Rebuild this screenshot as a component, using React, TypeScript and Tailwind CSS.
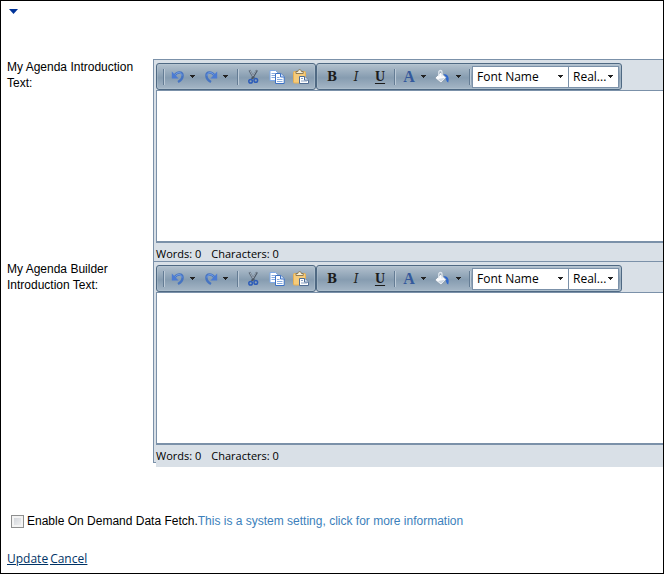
import React, { useState } from 'react';

const Caret = () => (
    <svg width="5" height="3" viewBox="0 0 5 3" className="shrink-0" fill="#222" shapeRendering="crispEdges">
        <path d="M0 0h5v1H0zM1 1h3v1H1zM2 2h1v1H2z" />
    </svg>
);

const UndoIcon = ({ flip = false }: { flip?: boolean }) => (
    <svg width="16" height="16" viewBox="0 0 16 16" className={flip ? '-scale-x-100' : ''} fill="none">
        <path d="M4.6 6.4C7 2.6 12.6 2.2 12.6 6.8C12.6 10 10.4 11.6 8 13" stroke="#4674c2" strokeWidth="2.4" />
        <path d="M5 5.8C7 2.8 11.8 2.8 12 6.6" stroke="#79a4ea" strokeWidth="0.9" />
        <path d="M1.8 2.6V9.4H8.6Z" fill="#4b7bd3" />
    </svg>
);

const CutIcon = () => (
    <svg width="16" height="16" viewBox="0 0 16 16" fill="none">
        <path d="M4.4 1.2L9.2 9.4" stroke="#5c6876" strokeWidth="2" />
        <path d="M12 1.2L6.8 10" stroke="#4a5664" strokeWidth="2" />
        <path d="M11.4 1.4L7.8 7.4M5 1.6L8 7" stroke="#b9c6d4" strokeWidth="0.7" />
        <circle cx="5.6" cy="12.2" r="1.8" stroke="#2d5cb8" strokeWidth="1.5" />
        <circle cx="10.8" cy="11.4" r="1.8" stroke="#2d5cb8" strokeWidth="1.5" />
    </svg>
);

const CopyIcon = () => (
    <svg width="16" height="16" viewBox="0 0 16 16">
        <path d="M1 1.5H6.5L9.5 4.5V11.5H1Z" fill="#fff" stroke="#7fa9e4" />
        <path d="M2.5 4.5H6M2.5 6.5H7M2.5 8.5H7" stroke="#86aadf" />
        <path d="M6.5 4.5H11.8L15.2 7.6V14.5H6.5Z" fill="#fff" stroke="#3c71c4" />
        <path d="M11.5 4.5V8H15.2" fill="#d6e5fa" stroke="#3c71c4" />
        <path d="M8 8.5H10.5M8 10.5H13.5M8 12.5H13.5" stroke="#86aadf" />
    </svg>
);

const PasteIcon = () => (
    <svg width="16" height="16" viewBox="0 0 16 16">
        <rect x="0.5" y="2.5" width="12" height="11.5" rx="1" fill="#f5cb7a" stroke="#e8b153" />
        <path d="M3 4.5V2.5H4.8C5 0 8.2 0 8.4 2.5H10.2V4.5Z" fill="#f5efd8" stroke="#84704c" strokeWidth="0.9" />
        <path d="M6.5 7.5H11.5L15.5 11.2V14.5H6.5Z" fill="#fff" stroke="#506d94" />
        <path d="M11.5 7.5V11.2H15.5" fill="#d7e3f2" stroke="#506d94" />
        <path d="M8 9.5H10M8 12H14" stroke="#8ba3c4" />
    </svg>
);

const FillIcon = () => (
    <svg width="16" height="16" viewBox="0 0 16 16">
        <path d="M9.4 5C13.6 5 15.8 8 14.2 13.6C12.2 12.6 12.4 10.4 11.4 9.2Z" fill="#2f67cd" />
        <path d="M1 9L6.6 3.4L12.2 8.6L7 14Z" fill="#fbfcfe" stroke="#8393a5" strokeWidth="0.7" />
        <path d="M4 10L11 8.8L7 12.8Z" fill="#cbd5e0" />
        <path d="M4.8 7.2V3C4.8 1 8 1 8 3V7.4" fill="none" stroke="#dfe6ed" strokeWidth="1.3" />
    </svg>
);

const Separator = ({ className = '' }: { className?: string }) => (
    <div className={`h-4 w-[2px] shrink-0 border-l border-[#647c94] bg-[#bccad7] ${className}`}></div>
);

interface ToolProps {
    label: string;
    children: React.ReactNode;
}

const Tool = ({ label, children }: ToolProps) => (
    <button type="button" aria-label={label} className="flex h-6 w-6 shrink-0 items-center justify-center">
        {children}
    </button>
);

const Arrow = ({ label }: { label: string }) => (
    <button type="button" aria-label={label} className="flex h-6 w-[9px] shrink-0 items-center">
        <Caret />
    </button>
);

interface PickerProps {
    label: string;
    options: string[];
    className: string;
}

const Picker = ({ label, options, className }: PickerProps) => (
    <div className={`relative h-[22px] shrink-0 ${className}`}>
        <select
            aria-label={label}
            className="h-full w-full appearance-none border border-[#7b91a9] bg-white pl-1 font-['Open_Sans','Noto_Sans',sans-serif] text-[12px] leading-5 text-black"
        >
            {options.map((option) => (
                <option key={option}>{option}</option>
            ))}
        </select>
        <span className="pointer-events-none absolute inset-y-0 right-[6px] flex items-center">
            <Caret />
        </span>
    </div>
);

const groupClass =
    'flex h-[27px] shrink-0 items-center rounded-[3px] border border-[#4f6983] bg-linear-to-b from-[#b3c1ce] from-0% via-[#869cb0] via-55% to-[#a5b6c6] to-100% shadow-[inset_0_0_0_1px_rgba(190,205,218,0.35)]';

interface EditorProps {
    id: string;
    last?: boolean;
}

const Editor = ({ id, last = false }: EditorProps) => {
    const [text, setText] = useState('');
    const words = text.trim() ? text.trim().split(/\s+/).length : 0;

    return (
        <div className="flex min-w-0 flex-1 overflow-hidden border-t border-[#7b91a9]">
            <div className={`w-[3px] shrink-0 border-l border-[#7b91a9] bg-[#d9e0e7] ${last ? 'mb-1 border-b' : ''}`}></div>
            <div className="min-w-0 flex-1 bg-[#d9e0e7]">
                {/* Toolbar */}
                <div className="flex pt-[3px]">
                    <div className={groupClass}>
                        <Separator className="ml-[6px] mr-px" />
                        <Tool label="Undo"><UndoIcon /></Tool>
                        <Arrow label="Undo history" />
                        <Tool label="Redo"><UndoIcon flip /></Tool>
                        <Arrow label="Redo history" />
                        <Separator className="ml-[5px] mr-[2px]" />
                        <Tool label="Cut"><CutIcon /></Tool>
                        <Tool label="Copy"><CopyIcon /></Tool>
                        <Tool label="Paste"><PasteIcon /></Tool>
                        <div className="w-[2px]"></div>
                    </div>
                    <div className={groupClass}>
                        <div className="w-[3px]"></div>
                        <Tool label="Bold">
                            <span className="font-['DejaVu_Serif',serif] text-[12px] font-bold leading-4 text-[#1c1c1c]">B</span>
                        </Tool>
                        <Tool label="Italic">
                            <span className="font-['DejaVu_Serif',serif] text-[12px] italic leading-4 text-[#222]">I</span>
                        </Tool>
                        <Tool label="Underline">
                            <span className="font-['Liberation_Serif',serif] text-[14px] font-bold leading-4 text-[#1c1c1c] underline underline-offset-2">U</span>
                        </Tool>
                        <Separator className="ml-[2px] mr-px" />
                        <Tool label="Font color">
                            <span className="font-['Liberation_Serif',serif] text-[16px] font-bold leading-4 text-[#34599c]">A</span>
                        </Tool>
                        <Arrow label="Choose font color" />
                        <Tool label="Fill"><FillIcon /></Tool>
                        <div className="w-[2px]"></div>
                        <Arrow label="Choose fill color" />
                        <Separator className="ml-1 mr-px" />
                        <Picker label="Font name" options={['Font Name']} className="w-[97px]" />
                        <Picker label="Font size" options={['Real...']} className="-ml-px w-[51px]" />
                        <div className="w-[2px]"></div>
                    </div>
                </div>
                <textarea
                    id={id}
                    value={text}
                    onChange={(e) => setText(e.target.value)}
                    className="block h-[153px] w-full resize-none border-b-2 border-l border-t border-[#7b91a9] bg-white p-1 text-[12px] outline-none"
                />
                <div className={`flex gap-[10px] font-['Open_Sans','Noto_Sans',sans-serif] text-[11px] leading-[22px] ${last ? 'h-[22px]' : 'h-[18px]'}`}>
                    <span>Words: {words}</span>
                    <span>Characters: {text.length}</span>
                </div>
            </div>
        </div>
    );
};

export default function App() {
    const [enabled, setEnabled] = useState(false);

    return (
        <main className="min-h-screen border border-black bg-white pl-[6px] font-['Liberation_Sans',Arial,sans-serif] text-[12px] leading-4 text-black">
            <div className="h-[58px] pl-[2px] pt-2">
                <button type="button" aria-label="Collapse section" className="block">
                    <svg width="9" height="5" viewBox="0 0 9 5" fill="#003399">
                        <path d="M0 0H9L4.5 5Z" />
                    </svg>
                </button>
            </div>

            <div className="flex">
                <label htmlFor="agenda-intro" className="w-[146px] shrink-0 pr-3">
                    My Agenda Introduction Text:
                </label>
                <Editor id="agenda-intro" />
            </div>
            <div className="flex">
                <label htmlFor="builder-intro" className="w-[146px] shrink-0 pr-3">
                    My Agenda Builder Introduction Text:
                </label>
                <Editor id="builder-intro" last />
            </div>

            <div className="mt-[46px] flex items-center pl-1">
                <input
                    id="data-fetch"
                    type="checkbox"
                    checked={enabled}
                    onChange={() => setEnabled(!enabled)}
                    className="mr-[3px] h-[13px] w-[13px] appearance-none border border-[#8e8f8f] bg-linear-to-br from-[#cbcfd5] to-[#f6f6f6] shadow-[inset_0_0_0_2px_#f4f4f4] checked:bg-none checked:bg-[#4b5f83]"
                />
                <label htmlFor="data-fetch">Enable On Demand Data Fetch.</label>
                <a href="#" className="text-[#3c7fbb]">This is a system setting, click for more information</a>
            </div>

            <div className="mt-[22px] flex gap-[2px] pb-[6px] font-['Open_Sans','Noto_Sans',sans-serif] text-[#003366] underline">
                <a href="#">Update</a>
                <a href="#">Cancel</a>
            </div>
        </main>
    );
}
